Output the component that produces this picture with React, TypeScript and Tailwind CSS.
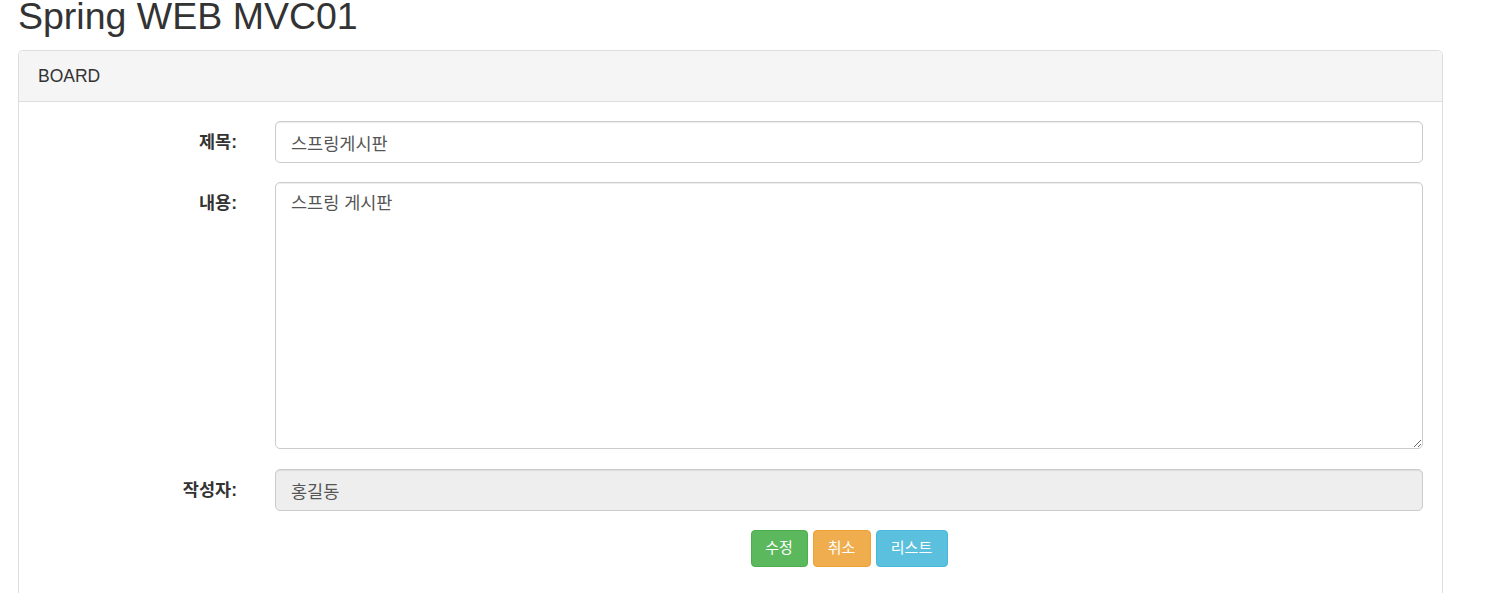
import React from 'react';

const kr = "font-['Liberation_Sans','Noto_Sans_CJK_KR',sans-serif]";

function Row({ label, last, children }: { label: string; last?: boolean; children: React.ReactNode }) {
  return (
    <div className={`flex ${last ? 'mb-[20px]' : 'mb-[19px]'}`}>
      <label className="w-[237px] shrink-0 pr-[19px] pt-[9px] text-right font-bold text-[#333] text-[17.5px] leading-[25px]">
        {label}
      </label>
      <div className="flex-1 px-[19px]">{children}</div>
    </div>
  );
}

const inputCls =
  "block w-full h-[42px] px-[15px] py-[7.5px] text-[17.5px] leading-[25px] text-[#555] border border-[#ccc] rounded-[5px] shadow-[inset_0_1px_1px_rgba(0,0,0,0.075)] outline-none";

export default function App() {
  return (
    <div className={`${kr} bg-white min-h-[593px] text-[#333] pl-[18px] pr-[63px] overflow-hidden`}>
      <h2 className="mt-0 mb-[17px] text-[37.5px] leading-[33px] font-normal text-[#333]">
        Spring WEB MVC01
      </h2>

      <div className="border border-[#ddd] rounded-[5px] bg-white h-[560px]">
        <div className="h-[51px] bg-[#f5f5f5] border-b border-[#ddd] rounded-t-[5px] px-[19px] flex items-center text-[17.5px] text-[#333]">
          BOARD
        </div>

        <form className="pt-[19px]">
          <Row label="제목:">
            <input className={inputCls} defaultValue="스프링게시판" />
          </Row>
          <Row label="내용:" last>
            <textarea
              className={`${inputCls} h-[267px] resize-y`}
              rows={10}
              defaultValue="스프링 게시판"
            />
          </Row>
          <Row label="작성자:">
            <input className={`${inputCls} bg-[#eee]`} readOnly defaultValue="홍길동" />
          </Row>
          <div className="flex">
            <div className="w-[237px] shrink-0" />
            <div className="flex-1 px-[19px] flex justify-center gap-[5px]">
              <button type="button" className="w-[57px] h-[37px] rounded-[4px] border border-[#4cae4c] bg-[#5cb85c] text-white text-[15px]">
                수정
              </button>
              <button type="button" className="w-[58px] h-[37px] rounded-[4px] border border-[#eea236] bg-[#f0ad4e] text-white text-[15px]">
                취소
              </button>
              <button type="button" className="w-[72px] h-[37px] rounded-[4px] border border-[#46b8da] bg-[#5bc0de] text-white text-[15px]">
                리스트
              </button>
            </div>
          </div>
        </form>
      </div>
    </div>
  );
}
